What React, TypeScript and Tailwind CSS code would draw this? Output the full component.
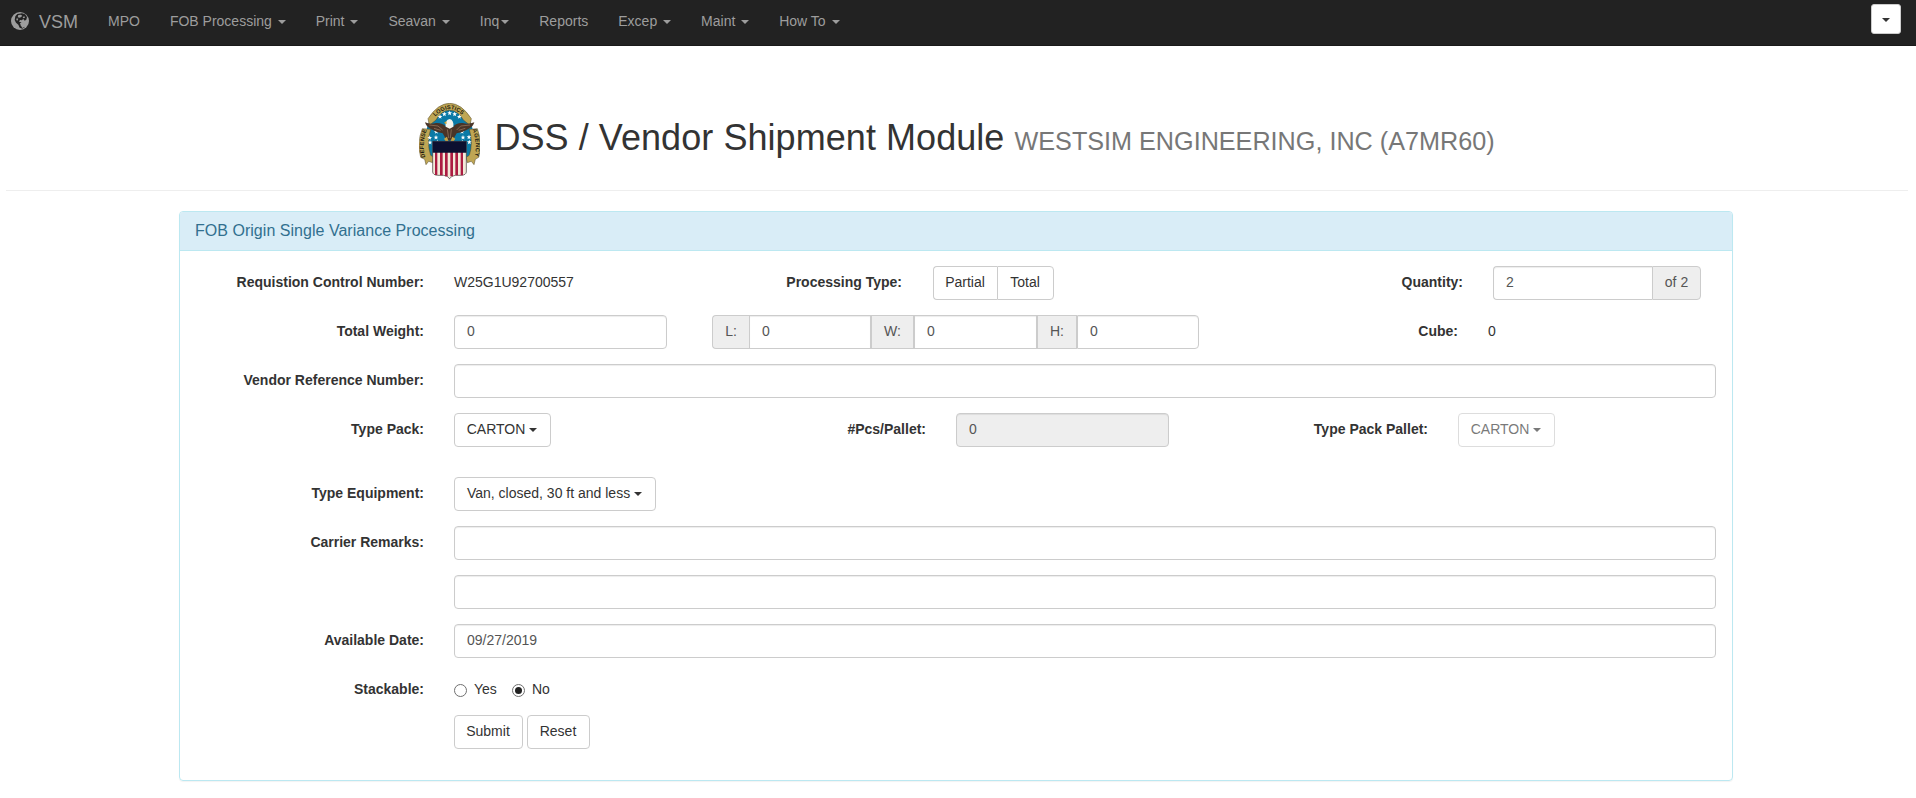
import React from "react";

const CTRL =
  "h-[34px] border border-[#ccc] bg-white text-sm leading-5 text-[#555] pl-3 pt-[5px] outline-none shadow-[inset_0_1px_1px_rgba(0,0,0,0.075)]";
const BTN =
  "h-[34px] border border-[#ccc] bg-white text-sm leading-5 text-[#333] pl-[11px] pr-3 pb-0.5 whitespace-nowrap";

function Caret({ className = "" }: { className?: string }) {
  return (
    <span
      className={`inline-block h-0 w-0 border-x-4 border-t-4 border-x-transparent border-t-current align-middle ${className}`}
    />
  );
}

function Globe() {
  return (
    <svg width="18" height="18" viewBox="0 0 54 54" className="shrink-0">
      <circle cx="27" cy="27" r="27" fill="#9d9d9d" />
      <path
        d="M19 6 L33 4 L42 7 L48 15 L46 23 L41 26 L37 21 L32 25 L27 24 L24 29 L31 31 L30 35 L35 39 L41 46 L34 50 L26 47 L22 38 L15 32 L11 24 L13 13 Z"
        fill="#222"
      />
      <path d="M22 9 L30 8 L34 12 L27 17 L20 16 Z M35 15 L40 13 L42 17 L37 19 Z M17 19 L22 20 L19 26 L16 24 Z" fill="#9d9d9d" />
      <path d="M27 33 L38 30 L44 35 L40 45 L34 48 L29 40 Z" fill="#9d9d9d" />
    </svg>
  );
}

const STARS: [number, number][] = [
  [90, 62], [103, 54], [119, 51], [134, 54], [148, 62],
  [79, 107], [78, 124], [59, 125], [82, 138], [60, 139],
  [156, 107], [159, 124], [177, 123], [157, 138], [178, 138],
];

function Star({ x, y }: { x: number; y: number }) {
  return (
    <path
      transform={`translate(${x} ${y})`}
      d="M0 -7 L2 -2 L7 -2 L3 1.5 L4.5 6.5 L0 3.5 L-4.5 6.5 L-3 1.5 L-7 -2 L-2 -2 Z"
      fill="#fff"
    />
  );
}

function Seal() {
  return (
    <svg width="61" height="76" viewBox="27 21 183 228" className="shrink-0">
      <defs>
        <path id="arcTop" d="M76 62 Q119 16 164 64" />
        <path id="arcLeft" d="M46 184 Q34 140 52 99" />
        <path id="arcRight" d="M187 100 Q203 140 194 184" />
      </defs>
      <ellipse cx="119" cy="125" rx="72" ry="92" fill="#0b7aa6" />
      <path d="M58 88 L54 68 Q84 22 119 22 Q154 22 184 68 L180 88 L160 72 Q144 43 119 43 Q94 43 78 72 Z" fill="#bfa654" stroke="#4e4526" strokeWidth="1.5" />
      <path d="M37 98 L62 100 Q49 140 62 178 L72 184 L68 200 L56 196 L48 206 L44 190 L32 184 Q20 140 37 98 Z" fill="#bfa654" stroke="#4e4526" strokeWidth="1.5" />
      <path d="M202 98 L178 100 Q190 140 178 178 L168 184 L172 200 L184 196 L192 206 L196 190 L206 184 Q218 140 202 98 Z" fill="#bfa654" stroke="#4e4526" strokeWidth="1.5" />
      <g fill="#1c1a12" fontFamily="Liberation Sans, sans-serif" fontWeight="700" fontSize="17">
        <text><textPath href="#arcTop" textLength="92">LOGISTICS</textPath></text>
        <text><textPath href="#arcLeft" textLength="84">DEFENSE</textPath></text>
        <text><textPath href="#arcRight" textLength="82">AGENCY</textPath></text>
      </g>
      {STARS.map(([x, y]) => (
        <Star key={`${x}-${y}`} x={x} y={y} />
      ))}
      <path d="M45 79 Q60 86 78 81 Q98 80 108 92 L130 92 Q138 80 158 81 Q176 86 193 79 Q190 92 174 100 Q158 110 140 112 L132 126 L118 134 L106 126 L98 112 Q80 110 64 100 Q48 92 45 79 Z" fill="#4a3427" />
      <path d="M58 87 L84 90 L98 102 M180 87 L152 90 L140 102 M72 97 L92 103 M166 97 L146 103 M112 100 L116 126 M124 100 L121 126" stroke="#8f7058" strokeWidth="2.5" fill="none" />
      <path d="M107 92 Q105 71 119 69 Q132 72 130 92 L119 98 Z" fill="#f6f4ec" />
      <path d="M109 75 L102 81 L110 84 Z" fill="#e0aa2c" />
      <path d="M102 128 L111 122 L116 138 L107 136 Z M121 138 L127 122 L136 128 L131 136 Z" fill="#c9a546" />
      <path d="M68 136 H169 V228 Q168 237 154 238 H136 Q124 239 119 248 Q113 239 101 238 H83 Q69 237 68 228 Z" fill="#f2ead9" stroke="#3a3430" strokeWidth="2" />
      <path d="M75 168 h7 v69 h-7 Z M90 168 h8 v70 h-8 Z M105 168 h8 v73 h-8 Z M121 168 h8 v73 h-8 Z M136 168 h8 v70 h-8 Z M152 168 h7 v70 h-7 Z" fill="#ab1c42" />
      <path d="M68 136 H169 V170 H68 Z" fill="#0c1030" />
    </svg>
  );
}

const MENU: { label: string; caret: "none" | "spaced" | "tight" }[] = [
  { label: "MPO", caret: "none" },
  { label: "FOB Processing", caret: "spaced" },
  { label: "Print", caret: "spaced" },
  { label: "Seavan", caret: "spaced" },
  { label: "Inq", caret: "tight" },
  { label: "Reports", caret: "none" },
  { label: "Excep", caret: "spaced" },
  { label: "Maint", caret: "spaced" },
  { label: "How To", caret: "spaced" },
];

function Navbar() {
  return (
    <nav className="flex h-[46px] items-start justify-between border-b border-[#1a1a1a] bg-[#222] text-[#9d9d9d]">
      <div className="flex">
        <div className="flex w-[93px] items-start pl-[11px] pt-3">
          <Globe />
          <span className="ml-2.5 text-lg leading-5">VSM</span>
        </div>
        {MENU.map((m) => (
          <a key={m.label} className="px-[15px] pt-[11px] text-sm leading-5 whitespace-nowrap">
            {m.label}
            {m.caret === "spaced" && " "}
            {m.caret !== "none" && <Caret className="ml-0.5" />}
          </a>
        ))}
      </div>
      <button className="mr-[15px] mt-1 flex h-[30px] w-[30px] items-center justify-center rounded-[3px] border border-[#ccc] bg-white pt-px text-[#333]">
        <Caret />
      </button>
    </nav>
  );
}

function Label({ className, children }: { className: string; children: React.ReactNode }) {
  return (
    <label className={`shrink-0 pt-1.5 text-right text-sm leading-5 font-bold whitespace-nowrap ${className}`}>
      {children}
    </label>
  );
}

function Row({ className = "mb-[15px]", children }: { className?: string; children: React.ReactNode }) {
  return <div className={`flex h-[34px] ${className}`}>{children}</div>;
}

function Addon({ className, children }: { className: string; children: React.ReactNode }) {
  return (
    <span className={`h-[34px] shrink-0 border-[#ccc] bg-[#eee] pt-[5px] text-center text-sm leading-5 text-[#555] ${className}`}>
      {children}
    </span>
  );
}

function Field({ className, children }: { className: string; children?: React.ReactNode }) {
  return <div className={`${CTRL} ${className}`}>{children}</div>;
}

function Radio({ checked = false }: { checked?: boolean }) {
  return (
    <span className="mt-[9px] flex h-[13px] w-[13px] items-center justify-center rounded-full border border-[#707070] bg-white">
      {checked && <span className="h-[7px] w-[7px] rounded-full bg-[#222]" />}
    </span>
  );
}

export default function App() {
  return (
    <div className="h-[798px] w-full overflow-hidden bg-white font-['Liberation_Sans',Arial,sans-serif] text-sm leading-5 text-[#333]">
      <Navbar />

      <header className="ml-1.5 mr-2 flex h-[145px] items-start justify-center border-b border-[#eee] pt-[57px]">
        <Seal />
        <h1 className="ml-[14px] mt-[15px] text-[36px] leading-10 tracking-[0.06px] whitespace-nowrap">
          DSS / Vendor Shipment Module{" "}
          <small className="text-[25.2px] leading-none tracking-normal text-[#777]">WESTSIM ENGINEERING, INC (A7MR60)</small>
        </h1>
      </header>

      <main className="ml-[179px] mt-5 h-[570px] w-[1554px] rounded border border-[#bce8f1] shadow-[0_1px_1px_rgba(0,0,0,0.05)]">
        <div className="h-[39px] rounded-t-[3px] border-b border-[#bce8f1] bg-[#d9edf7] pl-[15px] pt-[9px] text-base leading-5 tracking-[0.03px] text-[#31708f]">
          FOB Origin Single Variance Processing
        </div>
        <form className="pt-[15px]">
          <Row>
            <Label className="w-[244px]">Requistion Control Number:</Label>
            <span className="ml-[30px] w-[150px] pt-1.5">W25G1U92700557</span>
            <Label className="w-[298px]">Processing Type:</Label>
            <button type="button" className={`${BTN} ml-[31px] w-[64px] rounded-l border-r-0`}>Partial</button>
            <button type="button" className={`${BTN} w-[57px] rounded-r`}>Total</button>
            <Label className="w-[409px]">Quantity:</Label>
            <Field className="ml-[30px] w-[159px] rounded-l border-r-0">2</Field>
            <Addon className="w-[49px] rounded-r border">of 2</Addon>
          </Row>

          <Row>
            <Label className="w-[244px]">Total Weight:</Label>
            <Field className="ml-[30px] w-[213px] rounded">0</Field>
            <Addon className="ml-[45px] w-[37px] rounded-l border-y border-l">L:</Addon>
            <Field className="w-[122px]">0</Field>
            <Addon className="w-[43px] border">W:</Addon>
            <Field className="w-[123px]">0</Field>
            <Addon className="w-[40px] border">H:</Addon>
            <Field className="w-[122px] rounded-r">0</Field>
            <Label className="w-[259px]">Cube:</Label>
            <span className="ml-[30px] pt-1.5">0</span>
          </Row>

          <Row>
            <Label className="w-[244px]">Vendor Reference Number:</Label>
            <Field className="ml-[30px] w-[1262px] rounded" />
          </Row>

          <Row className="mb-[30px]">
            <Label className="w-[244px]">Type Pack:</Label>
            <button type="button" className={`${BTN} ml-[30px] w-[97px] rounded`}>
              CARTON <Caret />
            </button>
            <Label className="w-[375px]">#Pcs/Pallet:</Label>
            <div className="ml-[30px] h-[34px] w-[213px] rounded border border-[#ccc] bg-[#eee] pt-[5px] pl-3 text-sm leading-5 text-[#555] shadow-[inset_0_1px_1px_rgba(0,0,0,0.075)]">
              0
            </div>
            <Label className="w-[259px]">Type Pack Pallet:</Label>
            <button type="button" disabled className={`${BTN} ml-[30px] w-[97px] rounded opacity-65`}>
              CARTON <Caret />
            </button>
          </Row>

          <Row>
            <Label className="w-[244px]">Type Equipment:</Label>
            <button type="button" className={`${BTN} ml-[30px] w-[202px] rounded`}>
              Van, closed, 30 ft and less <Caret />
            </button>
          </Row>

          <Row>
            <Label className="w-[244px]">Carrier Remarks:</Label>
            <Field className="ml-[30px] w-[1262px] rounded" />
          </Row>

          <Row>
            <Field className="ml-[274px] w-[1262px] rounded" />
          </Row>

          <Row>
            <Label className="w-[244px]">Available Date:</Label>
            <Field className="ml-[30px] w-[1262px] rounded">09/27/2019</Field>
          </Row>

          <Row className="mb-2">
            <Label className="w-[244px]">Stackable:</Label>
            <div className="ml-[30px] flex items-start pt-0.5">
              <Radio />
              <span className="ml-[7px] w-[38px] pt-1">Yes</span>
              <Radio checked />
              <span className="ml-[7px] pt-1">No</span>
            </div>
          </Row>

          <Row>
            <button type="button" className={`${BTN} ml-[274px] w-[69px] rounded`}>Submit</button>
            <button type="button" className={`${BTN} ml-1 w-[63px] rounded`}>Reset</button>
          </Row>
        </form>
      </main>
    </div>
  );
}
